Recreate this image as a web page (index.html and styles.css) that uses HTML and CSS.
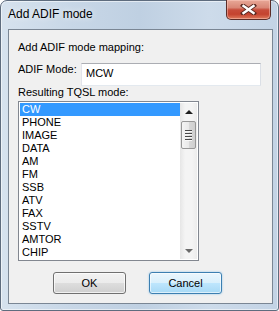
FILE: index.html
```html
<!DOCTYPE html>
<html lang="en">
<head>
    <meta charset="UTF-8">
    <title>Add ADIF mode</title>
    <link rel="stylesheet" href="styles.css">
</head>
<body>
    <div class="window">
        <div class="titlebar">
            <span class="title">Add ADIF mode</span>
            <button class="close-btn">
                <svg width="17" height="11" viewBox="0 0 17 11">
                    <path d="M3 1.5 L14 9.5 M14 1.5 L3 9.5" stroke="#5a2a22" stroke-width="4.2" stroke-linecap="square"/>
                    <path d="M3.5 2 L13.5 9 M13.5 2 L3.5 9" stroke="#fff" stroke-width="2.4" stroke-linecap="square"/>
                </svg>
            </button>
        </div>
        <div class="client">
            <div class="heading">Add ADIF mode mapping:</div>
            <div class="field-row">
                <label class="field-label">ADIF Mode:</label>
                <div class="textbox">MCW</div>
            </div>
            <div class="list-label">Resulting TQSL mode:</div>
            <div class="listbox">
                <ul class="items">
                    <li class="selected">CW</li>
                    <li>PHONE</li>
                    <li>IMAGE</li>
                    <li>DATA</li>
                    <li>AM</li>
                    <li>FM</li>
                    <li>SSB</li>
                    <li>ATV</li>
                    <li>FAX</li>
                    <li>SSTV</li>
                    <li>AMTOR</li>
                    <li>CHIP</li>
                </ul>
                <div class="scrollbar">
                    <div class="arrow up"></div>
                    <div class="thumb">
                        <span></span><span></span><span></span><span></span>
                    </div>
                    <div class="track"></div>
                    <div class="arrow down"></div>
                </div>
            </div>
            <div class="buttons">
                <button class="btn">OK</button>
                <button class="btn default">Cancel</button>
            </div>
        </div>
    </div>
</body>
</html>
```

FILE: styles.css
```css
body {
    margin: 0;
    width: 279px;
    height: 311px;
    background: #ffffff;
    font-family: "Liberation Sans", Arial, sans-serif;
    font-size: 11px;
    color: #000;
}
.window {
    box-sizing: border-box;
    width: 279px;
    height: 311px;
    border: 1px solid #5e6c7e;
    border-radius: 7px 7px 3px 3px;
    padding: 0 5px 6px 7px;
    display: flex;
    flex-direction: column;
    background: linear-gradient(90deg, #d6e2ee 0%, #c8d7e7 25%, #bfd0e2 50%, #cddbea 75%, #c3d3e5 100%);
    box-shadow: inset 0 0 0 1px rgba(255, 255, 255, 0.55);
}
.titlebar {
    height: 28px;
    display: flex;
    align-items: flex-start;
}
.title {
    font-size: 12px;
    line-height: 15px;
    margin-top: 6px;
    text-shadow: 0 0 6px rgba(255, 255, 255, 0.9);
}
.close-btn {
    margin-left: auto;
    margin-top: -1px;
    margin-right: 2px;
    width: 45px;
    height: 20px;
    padding: 0;
    border: 1px solid #5b2d28;
    border-top: none;
    border-radius: 0 0 5px 5px;
    display: flex;
    align-items: center;
    justify-content: center;
    background: linear-gradient(180deg, #e8a898 0%, #d98776 40%, #c74c3a 52%, #c4432f 75%, #de7a5c 100%);
    box-shadow: inset 0 0 0 1px rgba(255, 210, 200, 0.45);
}
.client {
    flex: 1;
    border: 1px solid #7a8694;
    background: #f0f0f0;
    padding: 11px 11px 0 9px;
    display: flex;
    flex-direction: column;
}
.heading {
    line-height: 13px;
}
.field-row {
    display: flex;
    align-items: flex-start;
    margin-top: 9px;
}
.field-label {
    width: 63px;
    line-height: 13px;
}
.textbox {
    box-sizing: border-box;
    width: 180px;
    height: 23px;
    background: #fff;
    border: 1px solid #abadb3;
    border-color: #abadb3 #dbdfe6 #e3e9ef #e2e3ea;
    padding: 3px 4px;
    line-height: 13px;
}
.list-label {
    line-height: 13px;
    margin-top: 0;
}
.listbox {
    box-sizing: border-box;
    width: 181px;
    height: 160px;
    margin-top: 2px;
    border: 1px solid #828790;
    background: #fff;
    padding: 1px;
    display: flex;
}
.items {
    list-style: none;
    margin: 0;
    padding: 0;
    flex: 1;
}
.items li {
    height: 13px;
    line-height: 13px;
    padding-left: 2px;
}
.items li.selected {
    background: #3399ff;
    color: #fff;
}
.scrollbar {
    width: 17px;
    display: flex;
    flex-direction: column;
    background: linear-gradient(90deg, #e6e6e6 0%, #f4f4f4 30%, #f4f4f4 70%, #ececec 100%);
}
.arrow {
    height: 17px;
    display: flex;
    align-items: center;
    justify-content: center;
}
.arrow::before {
    content: "";
    border-left: 4px solid transparent;
    border-right: 4px solid transparent;
}
.arrow.up::before {
    border-bottom: 4px solid #1e1e1e;
}
.arrow.down::before {
    border-top: 4px solid #6a6a6a;
}
.thumb {
    box-sizing: border-box;
    height: 28px;
    margin: 1px 1px 0 1px;
    border: 1px solid #979797;
    border-radius: 2px;
    background: linear-gradient(90deg, #f4f4f4 0%, #e9e9e9 50%, #d8d8d8 51%, #cfcfcf 100%);
    display: flex;
    flex-direction: column;
    justify-content: center;
    align-items: center;
    gap: 1px;
}
.thumb span {
    width: 7px;
    height: 1px;
    background: #4a4a4a;
    border-bottom: 1px solid #f8f8f8;
}
.track {
    flex: 1;
}
.buttons {
    display: flex;
    justify-content: center;
    gap: 23px;
    margin-top: 11px;
    padding-right: 4px;
}
.btn {
    box-sizing: border-box;
    width: 73px;
    height: 22px;
    padding: 0;
    font-family: "Liberation Sans", Arial, sans-serif;
    font-size: 11px;
    color: #000;
    border: 1px solid #707070;
    border-radius: 3px;
    background: linear-gradient(180deg, #f2f2f2 0%, #ebebeb 50%, #dddddd 51%, #cfcfcf 100%);
    box-shadow: inset 0 0 0 1px rgba(255, 255, 255, 0.7);
}
.btn.default {
    border-color: #3c7fb1;
    background: linear-gradient(180deg, #eaf6fd 0%, #d9f0fc 50%, #bee6fd 51%, #a7d9f5 100%);
    box-shadow: inset 0 0 0 1px rgba(255, 255, 255, 0.6), 0 0 2px rgba(60, 160, 230, 0.6);
}
```
